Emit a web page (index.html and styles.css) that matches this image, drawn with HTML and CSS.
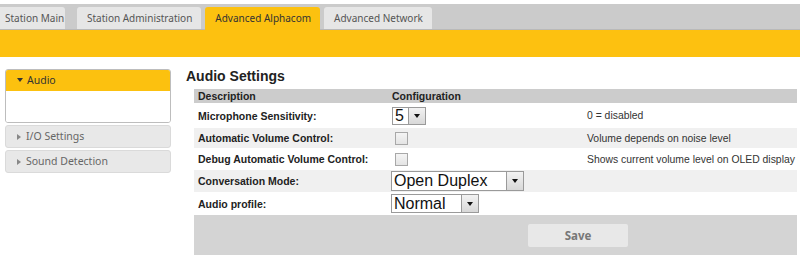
FILE: index.html
```html
<!DOCTYPE html>
<html>
<head>
<meta charset="utf-8">
<link rel="stylesheet" href="styles.css">
</head>
<body>
<div class="top">
  <div class="tabs">
    <div class="tab first">Station Main</div>
    <div class="tab">Station Administration</div>
    <div class="tab active">Advanced Alphacom</div>
    <div class="tab">Advanced Network</div>
  </div>
  <div class="band"></div>
</div>
<div class="page">
  <div class="side">
    <div class="panel open">
      <div class="panel-head"><span class="arrow-down"></span>Audio</div>
      <div class="panel-body"></div>
    </div>
    <div class="panel closed"><span class="arrow-right"></span>I/O Settings</div>
    <div class="panel closed"><span class="arrow-right"></span>Sound Detection</div>
  </div>
  <div class="main">
    <h1>Audio Settings</h1>
    <table class="grid">
      <tr class="head"><th class="c1">Description</th><th class="c2">Configuration</th><th class="c3"></th></tr>
      <tr class="r-mic"><td class="lbl">Microphone Sensitivity:</td><td><span class="sel s-small"><span class="val">5</span><span class="btn"><span class="tri"></span></span></span></td><td class="note">0 = disabled</td></tr>
      <tr class="alt r-chk"><td class="lbl">Automatic Volume Control:</td><td><span class="chk"></span></td><td class="note">Volume depends on noise level</td></tr>
      <tr class="r-chk"><td class="lbl">Debug Automatic Volume Control:</td><td><span class="chk"></span></td><td class="note">Shows current volume level on OLED display</td></tr>
      <tr class="alt r-sel"><td class="lbl">Conversation Mode:</td><td><span class="sel s-wide"><span class="val">Open Duplex</span><span class="btn"><span class="tri"></span></span></span></td><td></td></tr>
      <tr class="r-sel2"><td class="lbl">Audio profile:</td><td><span class="sel s-mid"><span class="val">Normal</span><span class="btn"><span class="tri"></span></span></span></td><td></td></tr>
      <tr class="foot"><td colspan="3"><span class="save">Save</span></td></tr>
    </table>
  </div>
</div>
</body>
</html>
```

FILE: styles.css
```css
html, body { margin: 0; padding: 0; background: #fff; }
body { width: 800px; height: 259px; overflow: hidden; font-family: "Noto Sans", sans-serif; }

.top { padding-top: 4px; }
.tabs {
  background: #cbcbcb;
  height: 26px;
  display: flex;
  align-items: flex-end;
  gap: 4px;
  border-bottom: 1px solid #b9b9b9;
  box-sizing: border-box;
}
.tab {
  height: 22px;
  line-height: 22px;
  padding: 0 9px 0 10px;
  background: #e6e6e6;
  color: #555;
  font-size: 10px;
  border-radius: 3px 3px 0 0;
  white-space: nowrap;
}
.tab.first { padding: 0 0 0 5px; width: 60px; margin-right: 8px; border-radius: 0 3px 0 0; }
.tab.active { background: #fcc10f; color: #333; height: 23px; margin-bottom: -1px; }
.band { background: #fdc110; height: 27px; }

.page { display: flex; padding-top: 12px; }
.side { width: 166px; margin-left: 5px; display: flex; flex-direction: column; gap: 2px; }
.panel { border-radius: 3px; font-size: 10.5px; }
.panel.open { border: 1px solid #bdbdbd; overflow: hidden; }
.panel-head { background: #fcc10f; height: 21px; line-height: 21px; padding-left: 11px; color: #333; }
.panel-body { height: 31px; background: #fff; }
.panel.closed {
  background: #e8e8e8;
  border: 1px solid #dadada;
  height: 21px;
  line-height: 21px;
  padding-left: 11px;
  color: #666;
}
.arrow-down {
  display: inline-block;
  width: 0; height: 0;
  border-left: 3.5px solid transparent;
  border-right: 3.5px solid transparent;
  border-top: 4px solid #333;
  margin-right: 4px;
  vertical-align: 2px;
}
.arrow-right {
  display: inline-block;
  width: 0; height: 0;
  border-top: 3.5px solid transparent;
  border-bottom: 3.5px solid transparent;
  border-left: 4px solid #888;
  margin-right: 5px;
  vertical-align: 0px;
}

.main { margin-left: 15px; font-family: "Liberation Sans", Arial, sans-serif; }
h1 { font-size: 14px; font-weight: bold; margin: -3px 0 0 0; color: #222; height: 23px; line-height: 20px; }
.grid { margin-left: 8px; border-collapse: collapse; width: 603px; table-layout: fixed; font-size: 10.5px; color: #222; }
.grid td, .grid th { padding: 0 0 0 4px; text-align: left; vertical-align: middle; white-space: nowrap; }
.c1 { width: 190px; }
.c2 { width: 191px; }
.head th { background: #cccccc; height: 14px; line-height: 14px; font-weight: bold; }
.lbl { font-weight: bold; }
.note { font-size: 10.4px; color: #333; }
.r-mic td { height: 23px; border-top: 1px solid #fff; }
.r-chk td { height: 20px; border-top: 1px solid #fff; }
.r-sel td { height: 22px; border-top: 1px solid #fff; }
.r-sel2 td { height: 23px; }
.alt td { background: #f0f0f0; }
.foot td { background: #d4d4d4; height: 40px; padding: 0; }

.sel {
  display: inline-flex;
  align-items: stretch;
  background: #fff;
  border: 1px solid #9a9a9a;
  box-sizing: border-box;
  vertical-align: middle;
  font-size: 16px;
  color: #111;
}
.sel .val { flex: 1; padding-left: 2px; line-height: 17px; }
.sel .btn {
  width: 16px;
  background: linear-gradient(#f2f2f2, #d8d8d8);
  border-left: 1px solid #9a9a9a;
  display: flex;
  align-items: center;
  justify-content: center;
}
.tri {
  width: 0; height: 0;
  border-left: 3px solid transparent;
  border-right: 3px solid transparent;
  border-top: 4px solid #111;
}
.s-small { width: 34px; height: 18px; }
.s-small .val { line-height: 16px; }
.s-wide { width: 133px; height: 20px; margin-left: -1px; }
.s-wide .val { line-height: 18px; }
.s-mid { width: 88px; height: 19px; margin-left: -1px; }
.s-mid .val { line-height: 17px; }

.chk {
  display: inline-block;
  width: 13px; height: 13px;
  border: 1px solid #a8a8a8;
  box-sizing: border-box;
  background: linear-gradient(#f4f4f4, #e4e4e4);
  margin-left: 3px;
  vertical-align: middle;
}

.save {
  display: block;
  margin-left: 334px;
  width: 100px;
  height: 23px;
  line-height: 23px;
  background: #e8e8e8;
  border-radius: 2px;
  text-align: center;
  font-family: "Noto Sans", sans-serif;
  font-weight: bold;
  font-size: 11.5px;
  color: #777;
}
```
